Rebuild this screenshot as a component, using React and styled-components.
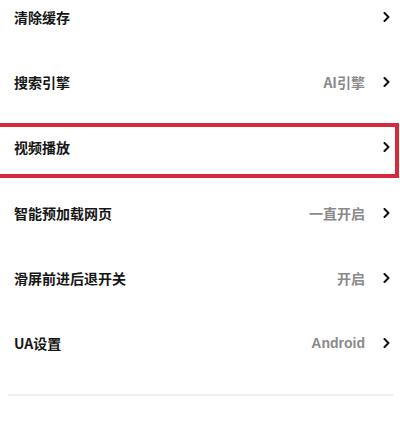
import React from "react";
import styled, { createGlobalStyle } from "styled-components";

const Global = createGlobalStyle`
  html, body { margin: 0; padding: 0; background: #fff; }
  body { font-family: "Noto Sans CJK SC", "Noto Sans", sans-serif; overflow: hidden; }
  * { box-sizing: border-box; }
`;

const Page = styled.div`
  width: 400px;
  height: 441px;
  overflow: hidden;
  background: #fff;
`;

const List = styled.div`
  display: flex;
  flex-direction: column;
  margin-top: -15.6px;
`;

const Row = styled.div`
  position: relative;
  height: 65.2px;
  display: flex;
  align-items: center;
  padding: 0 10px 0 14px;
`;

const Label = styled.span`
  flex: 1;
  font-size: 14px;
  font-weight: 700;
  color: #161616;
  line-height: 1;
`;

const Value = styled.span`
  font-size: 14px;
  font-weight: 700;
  color: #8a8a8a;
  line-height: 1;
  margin-right: 18px;
`;

const ValueLatin = styled(Value)`
  font-family: "Liberation Sans", "Noto Sans CJK SC", sans-serif;
`;

const Chevron = styled.svg`
  width: 7px;
  height: 10px;
  flex: none;
`;

const Highlight = styled.div`
  position: absolute;
  left: -10px;
  right: 1px;
  top: 8.2px;
  height: 55px;
  border: 4.5px solid #d8293a;
  pointer-events: none;
`;

const Divider = styled.div`
  height: 2px;
  background: #efefef;
  margin: 18px 7px 0 8px;
`;

const rows = [
  { label: "清除缓存" },
  { label: "搜索引擎", value: "AI引擎" },
  { label: "视频播放", highlight: true },
  { label: "智能预加载网页", value: "一直开启" },
  { label: "滑屏前进后退开关", value: "开启" },
  { label: "UA设置", value: "Android", latin: true },
];

const Arrow = () => (
  <Chevron viewBox="0 0 7 10">
    <path d="M1.5 1 L5.5 5 L1.5 9" fill="none" stroke="#111" strokeWidth="2" strokeLinecap="round" strokeLinejoin="round" />
  </Chevron>
);

export default function App() {
  return (
    <Page>
      <Global />
      <List>
        {rows.map((r) => (
          <Row key={r.label}>
            <Label>{r.label}</Label>
            {r.value && (r.latin ? <ValueLatin>{r.value}</ValueLatin> : <Value>{r.value}</Value>)}
            <Arrow />
            {r.highlight && <Highlight />}
          </Row>
        ))}
      </List>
      <Divider />
    </Page>
  );
}
